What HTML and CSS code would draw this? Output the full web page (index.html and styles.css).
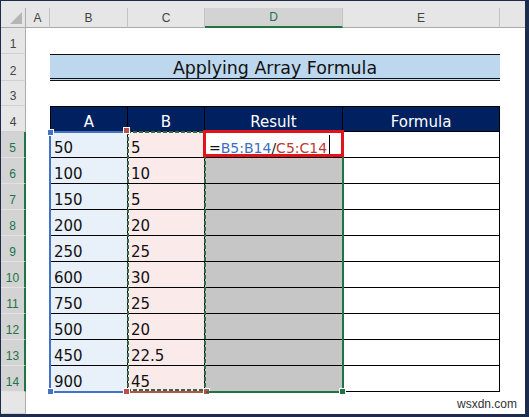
FILE: index.html
```html
<!DOCTYPE html>
<html>
<head>
  <meta charset="UTF-8">
  <title>Applying Array Formula</title>
  <link rel="stylesheet" href="styles.css">
</head>
<body>

<div class="sheet">
  <div class="strip"></div>

  <!-- Column headers -->
  <div class="colhead corner">
    <svg width="12" height="12" viewBox="0 0 12 12"><path d="M12 0 L12 12 L0 12 Z" fill="#b5b5b5"/></svg>
  </div>
  <div class="colhead">A</div>
  <div class="colhead">B</div>
  <div class="colhead">C</div>
  <div class="colhead colhead--active">D</div>
  <div class="colhead">E</div>
  <div class="colhead colhead--last"></div>

  <!-- Row 1 -->
  <div class="rowhead">1</div>
  <div class="blank span-6"></div>

  <!-- Row 2 -->
  <div class="rowhead">2</div>
  <div class="blank"></div>
  <div class="title">Applying Array Formula</div>
  <div class="blank"></div>

  <!-- Row 3 -->
  <div class="rowhead">3</div>
  <div class="blank span-6"></div>

  <!-- Row 4 -->
  <div class="rowhead">4</div>
  <div class="blank"></div>
  <div class="th th--first">A</div>
  <div class="th">B</div>
  <div class="th">Result</div>
  <div class="th">Formula</div>
  <div class="blank"></div>

  <!-- Rows 5-14 -->
  <div class="rowhead rowhead--active">5</div>
  <div class="blank"></div>
  <div class="td td--a">50</div>
  <div class="td td--b">5</div>
  <div class="td td--edit">
    <span class="op">=</span><span class="ref-b">B5:B14</span><span class="op">/</span><span class="ref-c">C5:C14</span><span class="caret"></span>
  </div>
  <div class="td"></div>
  <div class="blank"></div>

  <div class="rowhead rowhead--active">6</div>
  <div class="blank"></div>
  <div class="td td--a">100</div>
  <div class="td td--b">10</div>
  <div class="td td--sel"></div>
  <div class="td"></div>
  <div class="blank"></div>

  <div class="rowhead rowhead--active">7</div>
  <div class="blank"></div>
  <div class="td td--a">150</div>
  <div class="td td--b">5</div>
  <div class="td td--sel"></div>
  <div class="td"></div>
  <div class="blank"></div>

  <div class="rowhead rowhead--active">8</div>
  <div class="blank"></div>
  <div class="td td--a">200</div>
  <div class="td td--b">20</div>
  <div class="td td--sel"></div>
  <div class="td"></div>
  <div class="blank"></div>

  <div class="rowhead rowhead--active">9</div>
  <div class="blank"></div>
  <div class="td td--a">250</div>
  <div class="td td--b">25</div>
  <div class="td td--sel"></div>
  <div class="td"></div>
  <div class="blank"></div>

  <div class="rowhead rowhead--active">10</div>
  <div class="blank"></div>
  <div class="td td--a">600</div>
  <div class="td td--b">30</div>
  <div class="td td--sel"></div>
  <div class="td"></div>
  <div class="blank"></div>

  <div class="rowhead rowhead--active">11</div>
  <div class="blank"></div>
  <div class="td td--a">750</div>
  <div class="td td--b">25</div>
  <div class="td td--sel"></div>
  <div class="td"></div>
  <div class="blank"></div>

  <div class="rowhead rowhead--active">12</div>
  <div class="blank"></div>
  <div class="td td--a">500</div>
  <div class="td td--b">20</div>
  <div class="td td--sel"></div>
  <div class="td"></div>
  <div class="blank"></div>

  <div class="rowhead rowhead--active">13</div>
  <div class="blank"></div>
  <div class="td td--a">450</div>
  <div class="td td--b">22.5</div>
  <div class="td td--sel"></div>
  <div class="td"></div>
  <div class="blank"></div>

  <div class="rowhead rowhead--active">14</div>
  <div class="blank"></div>
  <div class="td td--a">900</div>
  <div class="td td--b">45</div>
  <div class="td td--sel"></div>
  <div class="td"></div>
  <div class="blank"></div>

  <!-- Row 15 -->
  <div class="rowhead"></div>
  <div class="blank span-6 watermark">wsxdn.com</div>

  <!-- Range highlights drawn over the cells -->
  <div class="range range--b">
    <i class="handle handle--tl"></i>
    <i class="handle handle--bl"></i>
  </div>
  <div class="range range--c">
    <i class="handle handle--tl"></i>
    <i class="handle handle--bl"></i>
    <i class="handle handle--br"></i>
  </div>
  <div class="range range--d">
    <i class="handle handle--br"></i>
  </div>
  <div class="edit-box"></div>
</div>

</body>
</html>
```

FILE: styles.css
```css
body {
  margin: 0;
  background: #fff;
}

.sheet {
  position: relative;
  display: grid;
  grid-template-columns: 25px 24px 78px 77px 138px 157px 25px;
  grid-template-rows: 7px 20px 26px 27px 25px 26px repeat(10, 26px) 22px;
  width: 529px;
  height: 417px;
  box-sizing: border-box;
  border: solid #1d2b4c;
  border-width: 1px 4px 3px 1px;
  font-family: "DejaVu Sans", sans-serif;
  color: #111;
}

.strip {
  grid-column: 1 / -1;
  background: #e6e6e6;
}


/* Headers */

.colhead,
.rowhead {
  display: flex;
  justify-content: center;
  box-sizing: border-box;
  background: #e6e6e6;
  font-family: "Liberation Sans", Arial, sans-serif;
  font-size: 12px;
  color: #444;
}

.colhead {
  align-items: center;
  border-right: 1px solid #c3c3c3;
  border-bottom: 1px solid #ababab;
}

.colhead--last { border-right: 0; }

.colhead--active {
  background: #d3d3d3;
  color: #217346;
  border-bottom: 2px solid #217346;
}

.corner {
  align-items: flex-end;
  justify-content: flex-end;
  padding: 0 3px 3px 0;
  border-right-color: #ababab;
}

.rowhead {
  align-items: flex-end;
  padding-bottom: 2px;
  line-height: 14px;
  border-right: 1px solid #ababab;
  border-bottom: 1px solid #d0d0d0;
}

.rowhead--active {
  background: #d3d3d3;
  color: #217346;
  border-right: 2px solid #217346;
  border-bottom-color: #e2e2e2;
}


/* Cells */

.blank { background: #fff; }

.span-6 { grid-column: span 6; }

.title {
  grid-column: span 4;
  display: flex;
  align-items: flex-end;
  justify-content: center;
  box-sizing: border-box;
  background: #bdd7ee;
  border-top: 1px solid #111;
  border-bottom: 3px double #111;
  font-size: 17.4px;
  line-height: 20px;
}

.th,
.td {
  display: flex;
  align-items: flex-end;
  box-sizing: border-box;
  border-right: 1px solid #000;
  border-bottom: 1px solid #000;
  font-size: 15px;
  line-height: 18px;
  white-space: nowrap;
}

.th {
  justify-content: center;
  background: #002060;
  border-top: 1px solid #000;
  color: #fff;
}

.th--first,
.td--a { border-left: 1px solid #000; }

.td { padding-left: 3px; }

.td--a { background: #e8f0fa; }
.td--b { background: #fbeaea; }
.td--sel { background: #c6c6c6; }

.td--edit {
  padding-left: 4px;
  font-size: 14px;
}

.op { color: #111; }
.ref-b { color: #3d6fc1; }
.ref-c { color: #c0392f; }

.caret {
  align-self: center;
  width: 1px;
  height: 20px;
  margin-left: 2px;
  background: #000;
}

.watermark {
  display: flex;
  align-items: flex-end;
  justify-content: flex-end;
  padding: 0 8px 3px 0;
  font-family: "Liberation Sans", Arial, sans-serif;
  font-size: 12px;
  color: #333;
}


/* Range highlights */

.range {
  position: absolute;
  grid-row: 7 / 17;
  top: -1px;
  right: -1px;
  bottom: -1px;
  left: -1px;
  box-sizing: border-box;
}

.range--b {
  grid-column: 3 / 4;
  border: 2px solid #4472c4;
  border-right: 0;
}

.range--c {
  grid-column: 4 / 5;
  border-bottom: 2px solid #b8504b;
  background:
    repeating-linear-gradient(to bottom, #2c6b45 0 4px, transparent 4px 6px) left top / 2px 100% no-repeat,
    repeating-linear-gradient(to bottom, #2c6b45 0 4px, transparent 4px 6px) right top / 2px 100% no-repeat,
    repeating-linear-gradient(to right, #2c6b45 0 4px, transparent 4px 6px) left top / 100% 2px no-repeat,
    repeating-linear-gradient(to right, #2c6b45 0 4px, transparent 4px 6px) left bottom / 100% 2px no-repeat;
}

.range--d {
  grid-column: 5 / 6;
  left: 1px;
  border: 2px solid #217346;
  border-left: 0;
  border-top: 0;
}

.handle {
  position: absolute;
  width: 5px;
  height: 5px;
  background: #b8504b;
  border: 1px solid #fff;
}

.range--b .handle { background: #4472c4; }
.range--d .handle { background: #217346; }

.handle--tl { top: -4px; left: -4px; }
.handle--bl { bottom: -4px; left: -4px; }
.handle--br { bottom: -4px; right: -4px; }

.edit-box {
  position: absolute;
  grid-column: 5 / 6;
  grid-row: 7 / 8;
  top: -2px;
  right: -1px;
  bottom: 1px;
  left: -2px;
  border: 3px solid #e3131b;
}
```
